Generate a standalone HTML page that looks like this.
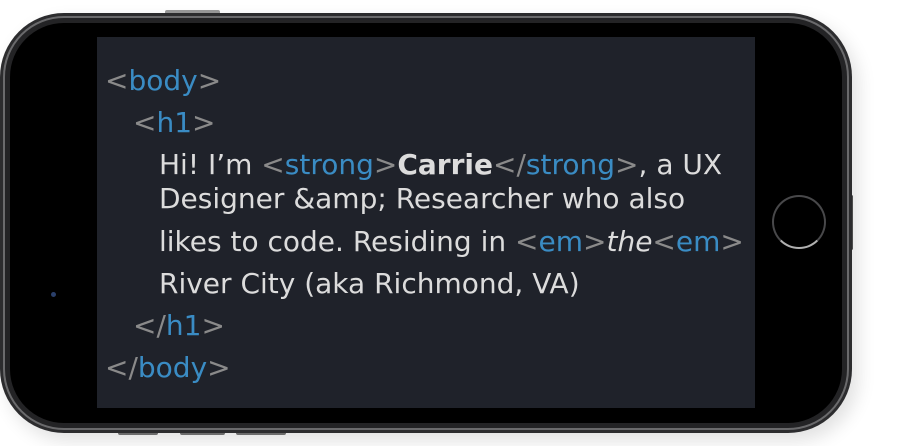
<!DOCTYPE html>
<html><head><meta charset="utf-8"><style>
html,body{margin:0;padding:0;background:#fff;width:910px;height:446px;overflow:hidden;position:relative}
.phone{position:absolute;left:0;top:13px;width:852px;height:420px;border-radius:64px;background:#2c2c2e;box-shadow:6px 8px 18px rgba(0,0,0,0.12)}
.ring{position:absolute;left:3px;top:3px;right:3px;bottom:3px;border-radius:61px;border:2px solid #6a6a6c;background:#232325}
.black{position:absolute;left:10px;top:23px;width:832px;height:400px;border-radius:54px;background:#000}
.btn{position:absolute;background:#888;border-radius:2px}
.screen{position:absolute;left:97px;top:37px;width:658px;height:371px;background:#1f222a}
.home{position:absolute;left:772px;top:195px;width:54px;height:54px;border-radius:50%;border:2px solid #48484a;border-bottom-color:#b0b0b0;box-sizing:border-box}
.cam{position:absolute;left:51px;top:292px;width:5px;height:5px;border-radius:50%;background:#2a3f6a}
.l{position:absolute;white-space:nowrap;font-family:"DejaVu Sans","Liberation Sans",sans-serif;font-size:28px;color:#dcdcdc;line-height:34px}
.g{color:#8a8a8a}.b{color:#3a8cc4}
</style></head><body>
<div class="btn" style="left:165px;top:10px;width:55px;height:5px;background:#999"></div>
<div class="btn" style="left:118px;top:431px;width:40px;height:4px;background:#777"></div>
<div class="btn" style="left:180px;top:431px;width:45px;height:4px;background:#777"></div>
<div class="btn" style="left:236px;top:431px;width:50px;height:4px;background:#777"></div>
<div class="btn" style="left:850px;top:195px;width:3px;height:55px;background:#555"></div>
<div class="phone"><div class="ring"></div></div>
<div class="black"></div>
<div class="cam"></div>
<div class="home"></div>
<div class="screen"></div>
<div class="l" style="left:105px;top:64px"><span class="g">&lt;</span><span class="b">body</span><span class="g">&gt;</span></div>
<div class="l" style="left:133px;top:106px"><span class="g">&lt;</span><span class="b">h1</span><span class="g">&gt;</span></div>
<div class="l" style="left:159px;top:148px">Hi! I’m <span class="g">&lt;</span><span class="b">strong</span><span class="g">&gt;</span><b>Carrie</b><span class="g">&lt;/</span><span class="b">strong</span><span class="g">&gt;</span>, a UX</div>
<div class="l" style="left:159px;top:182px">Designer &amp;amp; Researcher who also</div>
<div class="l" style="left:159px;top:225px">likes to code. Residing in <span class="g">&lt;</span><span class="b">em</span><span class="g">&gt;</span><i>the</i><span class="g">&lt;</span><span class="b">em</span><span class="g">&gt;</span></div>
<div class="l" style="left:159px;top:267px">River City (aka Richmond, VA)</div>
<div class="l" style="left:133px;top:309px"><span class="g">&lt;/</span><span class="b">h1</span><span class="g">&gt;</span></div>
<div class="l" style="left:105px;top:351px"><span class="g">&lt;/</span><span class="b">body</span><span class="g">&gt;</span></div>
</body></html>
